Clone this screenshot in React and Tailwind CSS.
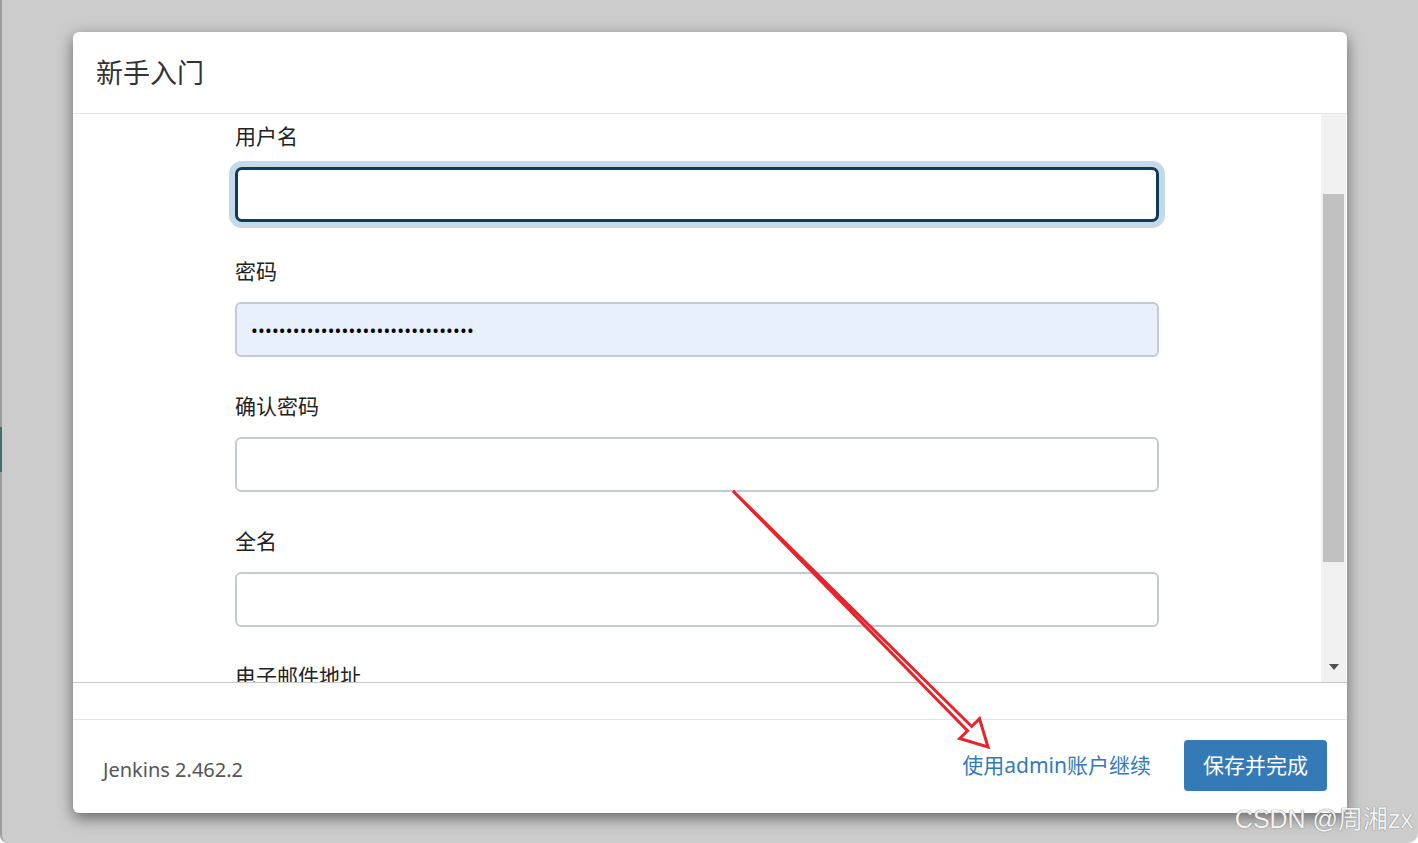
import React from 'react'

const CJK = { fontFamily: '"Noto Sans", "Noto Sans CJK SC", sans-serif' }

const fields = [
  { label: '用户名', focus: true },
  { label: '密码', password: true },
  { label: '确认密码' },
  { label: '全名' },
]

function Field({ label, focus, password }) {
  return (
    <div className="mb-[35px]">
      <div className="h-[28px] leading-[28px] text-[21px] text-[#222] mb-[17px]">{label}</div>
      {focus ? (
        <input type="text" readOnly
          className="block w-[924px] h-[55px] rounded-[7px] border-[3px] border-[#0c3b5d] bg-white shadow-[0_0_0_6px_#c4dae7] outline-none" />
      ) : password ? (
        <input type="password" readOnly value={'x'.repeat(32)}
          className="block w-[924px] h-[55px] rounded-[6px] border-[2.5px] border-[#c3cbd1] bg-[#e8f0fe] px-[14px] text-[18px] tracking-[0.2px] text-black outline-none" />
      ) : (
        <input type="text" readOnly
          className="block w-[924px] h-[55px] rounded-[6px] border-[2.5px] border-[#c3cbd1] bg-white outline-none" />
      )}
    </div>
  )
}

export default function App() {
  return (
    <div className="relative w-[1418px] h-[843px] overflow-hidden bg-white" style={CJK}>
      <div className="w-full h-full bg-[#cccccc] border-l-2 border-[#9d9d9d] rounded-br-[10px] rounded-bl-[8px] pt-[32px] pl-[71px]">
        <div className="w-[1274px] h-[781px] bg-white rounded-[6px] shadow-[0_5px_15px_rgba(0,0,0,0.5)] flex flex-col overflow-hidden">
          <div className="h-[82px] shrink-0 border-b border-[#e5e5e5] flex items-center pl-[23px]">
            <h1 className="text-[27px] text-[#333] font-normal mt-[2px]">新手入门</h1>
          </div>

          <div className="h-[569px] shrink-0 flex border-b border-[#c8c8c8]">
            <div className="flex-1 overflow-hidden pl-[162px] pt-[8px]">
              {fields.map(f => <Field key={f.label} {...f} />)}
              <div className="h-[28px] leading-[28px] text-[21px] text-[#222]">电子邮件地址</div>
            </div>
            <div className="w-[25px] bg-[#f1f1f1] flex flex-col items-center pt-[80px] pb-[12px] mr-[1px]">
              <div className="w-[21px] h-[368px] bg-[#c1c1c1]" />
              <div className="flex-1" />
              <div className="w-0 h-0 border-l-[5px] border-r-[5px] border-t-[6px] border-l-transparent border-r-transparent border-t-[#505050]" />
            </div>
          </div>

          <div className="h-[37px] shrink-0 border-b border-[#e5e5e5]" />

          <div className="flex-1 flex items-center pl-[30px] pr-[20px]">
            <span className="text-[20px] text-[#555] mt-[6px]">Jenkins 2.462.2</span>
            <div className="flex-1" />
            <a className="text-[21px] text-[#337ab7] mr-[33px] -mt-[2px] cursor-pointer">使用admin账户继续</a>
            <button className="h-[51px] px-[19px] rounded-[4px] bg-[#337ab7] text-white text-[21px] -mt-[2px]">保存并完成</button>
          </div>
        </div>
      </div>

      <div className="absolute left-0 top-[427px] w-[2px] h-[45px] bg-[#3f6e6e]" />

      <svg className="absolute inset-0 pointer-events-none" width="1418" height="843">
        <polygon
          points="733,491 971.7,726.5 979.5,718.7 988,747 959.7,738.5 967.5,730.7"
          fill="white" stroke="#e8232b" strokeWidth="3" strokeLinejoin="miter" />
      </svg>

      <div className="absolute right-[5px] bottom-[11px] text-[25px] text-[#f2f2f2] leading-none"
        style={{ fontFamily: '"Liberation Sans", "Noto Sans CJK SC", sans-serif', textShadow: '0 0 1px #808080, 0 0 1px #808080' }}>
        CSDN @周湘zx
      </div>
    </div>
  )
}
